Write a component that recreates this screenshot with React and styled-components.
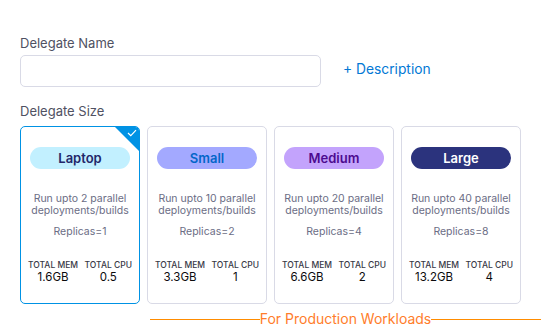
import React from "react";
import styled, { createGlobalStyle } from "styled-components";

const Global = createGlobalStyle`
  html, body { margin: 0; padding: 0; background: #fff; }
  body { font-family: Inter, "Noto Sans", sans-serif; -webkit-font-smoothing: antialiased; }
`;

const Page = styled.div`
  padding: 35px 0 0 20px;
`;

const Label = styled.div`
  font-size: 13px;
  line-height: 16px;
  color: #4f5162;
  margin-bottom: ${(p) => p.$mb || 0}px;
`;

const NameRow = styled.div`
  display: flex;
  align-items: center;
  gap: 22px;
  margin-bottom: 16px;
`;

const Input = styled.input`
  width: 301px;
  height: 32px;
  box-sizing: border-box;
  border: 1px solid #d9dae6;
  border-radius: 5px;
  outline: none;
  background: #fff;
`;

const DescLink = styled.span`
  font-size: 13.8px;
  color: #0278d5;
  margin-bottom: 4px;
`;

const Cards = styled.div`
  display: flex;
  gap: 7px;
  margin-top: 7px;
`;

const Card = styled.div`
  position: relative;
  width: 120px;
  height: 178px;
  box-sizing: border-box;
  border: ${(p) => (p.$selected ? "1.5px solid #0092e4" : "1px solid #d9dae6")};
  border-radius: 5px;
  overflow: hidden;
  display: flex;
  flex-direction: column;
  align-items: center;
  padding-top: 20px;
`;

const Corner = styled.div`
  position: absolute;
  top: 0;
  right: 0;
  width: 0;
  height: 0;
  border-top: 24px solid #0092e4;
  border-left: 24px solid transparent;
`;

const Check = styled.svg`
  position: absolute;
  top: 2px;
  right: 2px;
`;

const Pill = styled.div`
  width: 100px;
  height: 22px;
  border-radius: 11px;
  background: ${(p) => p.$bg};
  color: ${(p) => p.$fg};
  font-size: 13px;
  font-weight: 600;
  display: flex;
  align-items: center;
  justify-content: center;
`;

const Desc = styled.div`
  margin-top: 24px;
  font-size: 10.5px;
  line-height: 12px;
  color: #6b6d85;
  text-align: center;
`;

const Replicas = styled.div`
  margin-top: 9px;
  font-size: 10.5px;
  line-height: 12px;
  color: #6b6d85;
`;

const Stats = styled.div`
  margin-top: 22px;
  display: flex;
  justify-content: space-between;
  width: 100%;
  padding: 0 7px;
  box-sizing: border-box;
`;

const Stat = styled.div`
  display: flex;
  flex-direction: column;
  align-items: center;
`;

const StatLabel = styled.div`
  font-size: 8.5px;
  line-height: 10px;
  color: #383946;
  font-weight: 500;
`;

const StatValue = styled.div`
  font-size: 11.5px;
  line-height: 13px;
  color: #0b0b0d;
  margin-top: 1px;
`;

const Divider = styled.div`
  display: flex;
  align-items: center;
  margin: 6px 15px 0 130px;
  color: #ff7d2b;
  font-size: 14px;
  line-height: 18px;
  &::before, &::after {
    content: "";
    flex: 1;
    height: 1px;
    background: #ff8c00;
  }
`;

const sizes = [
  { name: "Laptop", bg: "#c2f0ff", fg: "#22276a", n: 2, r: 1, mem: "1.6GB", cpu: "0.5", sel: true },
  { name: "Small", bg: "#a3a9ff", fg: "#0366c9", n: 10, r: 2, mem: "3.3GB", cpu: "1" },
  { name: "Medium", bg: "#c3a3fc", fg: "#4d0b8f", n: 20, r: 4, mem: "6.6GB", cpu: "2" },
  { name: "Large", bg: "#2b337d", fg: "#ffffff", n: 40, r: 8, mem: "13.2GB", cpu: "4" },
];

export default function App() {
  return (
    <Page>
      <Global />
      <Label $mb={4}>Delegate Name</Label>
      <NameRow>
        <Input />
        <DescLink>+ Description</DescLink>
      </NameRow>
      <Label>Delegate Size</Label>
      <Cards>
        {sizes.map((s) => (
          <Card key={s.name} $selected={s.sel}>
            {s.sel && (
              <>
                <Corner />
                <Check width="10" height="8" viewBox="0 0 10 8">
                  <path d="M1 4 L3.8 6.6 L9 1.2" fill="none" stroke="#fff" strokeWidth="1.2" />
                </Check>
              </>
            )}
            <Pill $bg={s.bg} $fg={s.fg}>{s.name}</Pill>
            <Desc>
              Run upto {s.n} parallel
              <br />
              deployments/builds
            </Desc>
            <Replicas>Replicas={s.r}</Replicas>
            <Stats>
              <Stat>
                <StatLabel>TOTAL MEM</StatLabel>
                <StatValue>{s.mem}</StatValue>
              </Stat>
              <Stat>
                <StatLabel>TOTAL CPU</StatLabel>
                <StatValue>{s.cpu}</StatValue>
              </Stat>
            </Stats>
          </Card>
        ))}
      </Cards>
      <Divider>For Production Workloads</Divider>
    </Page>
  );
}
